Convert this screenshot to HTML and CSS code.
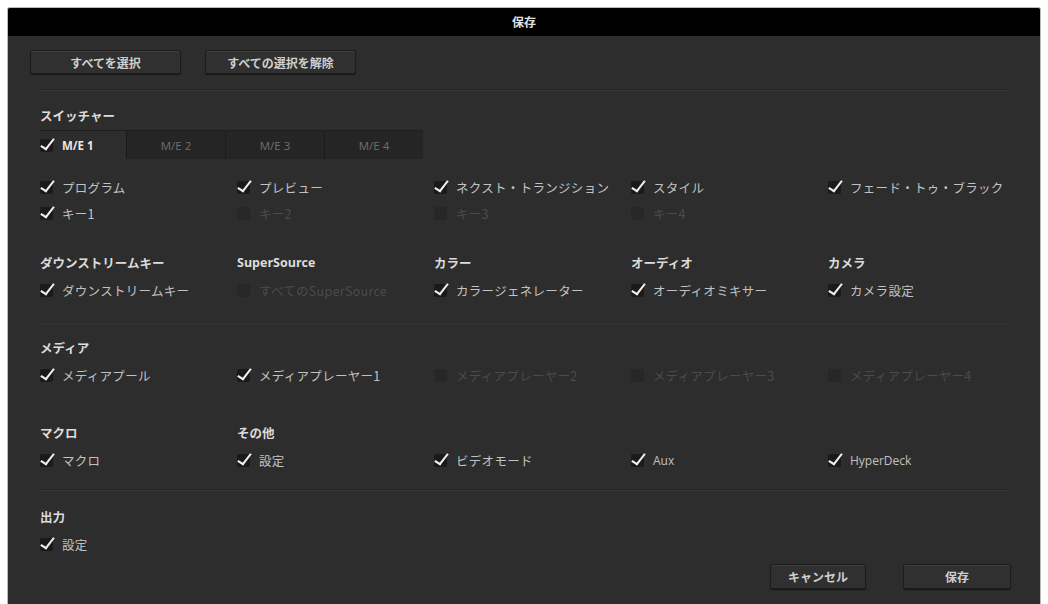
FILE: index.html
```html
<!DOCTYPE html>
<html lang="ja">
<head>
  <meta charset="UTF-8">
  <meta name="viewport" content="width=device-width, initial-scale=1.0">
  <title>保存</title>
  <link rel="stylesheet" href="styles.css">
</head>
<body>
  <div class="dialog">
    <div class="titlebar">保存</div>

    <div class="content">
      <div class="toolbar">
        <button class="btn btn-wide">すべてを選択</button>
        <button class="btn btn-wide">すべての選択を解除</button>
      </div>

      <div class="divider"></div>

      <!-- スイッチャー -->
      <section class="group group-switcher">
        <h2 class="group-title">スイッチャー</h2>
        <div class="tabs">
          <div class="tab active">
            <span class="box checked"></span>M/E 1
          </div>
          <div class="tab">M/E 2</div>
          <div class="tab">M/E 3</div>
          <div class="tab">M/E 4</div>
        </div>
        <div class="grid grid-me">
          <label class="item"><span class="box checked"></span>プログラム</label>
          <label class="item"><span class="box checked"></span>プレビュー</label>
          <label class="item"><span class="box checked"></span>ネクスト・トランジション</label>
          <label class="item"><span class="box checked"></span>スタイル</label>
          <label class="item"><span class="box checked"></span>フェード・トゥ・ブラック</label>
          <label class="item"><span class="box checked"></span>キー1</label>
          <label class="item disabled"><span class="box"></span>キー2</label>
          <label class="item disabled"><span class="box"></span>キー3</label>
          <label class="item disabled"><span class="box"></span>キー4</label>
        </div>
      </section>

      <section class="group group-sources">
        <div class="grid">
          <div class="col">
            <h2 class="group-title">ダウンストリームキー</h2>
            <label class="item"><span class="box checked"></span>ダウンストリームキー</label>
          </div>
          <div class="col">
            <h2 class="group-title latin">SuperSource</h2>
            <label class="item disabled"><span class="box"></span>すべてのSuperSource</label>
          </div>
          <div class="col">
            <h2 class="group-title">カラー</h2>
            <label class="item"><span class="box checked"></span>カラージェネレーター</label>
          </div>
          <div class="col">
            <h2 class="group-title">オーディオ</h2>
            <label class="item"><span class="box checked"></span>オーディオミキサー</label>
          </div>
          <div class="col">
            <h2 class="group-title">カメラ</h2>
            <label class="item"><span class="box checked"></span>カメラ設定</label>
          </div>
        </div>
      </section>

      <div class="divider divider-media"></div>

      <!-- メディア -->
      <section class="group group-media">
        <h2 class="group-title">メディア</h2>
        <div class="grid">
          <label class="item"><span class="box checked"></span>メディアプール</label>
          <label class="item"><span class="box checked"></span>メディアプレーヤー1</label>
          <label class="item disabled"><span class="box"></span>メディアプレーヤー2</label>
          <label class="item disabled"><span class="box"></span>メディアプレーヤー3</label>
          <label class="item disabled"><span class="box"></span>メディアプレーヤー4</label>
        </div>
      </section>

      <section class="group group-macro">
        <div class="grid">
          <div class="col">
            <h2 class="group-title">マクロ</h2>
            <label class="item"><span class="box checked"></span>マクロ</label>
          </div>
          <div class="col">
            <h2 class="group-title">その他</h2>
            <label class="item"><span class="box checked"></span>設定</label>
          </div>
          <div class="col">
            <h2 class="group-title">&nbsp;</h2>
            <label class="item"><span class="box checked"></span>ビデオモード</label>
          </div>
          <div class="col">
            <h2 class="group-title">&nbsp;</h2>
            <label class="item latin-item"><span class="box checked"></span>Aux</label>
          </div>
          <div class="col">
            <h2 class="group-title">&nbsp;</h2>
            <label class="item latin-item"><span class="box checked"></span>HyperDeck</label>
          </div>
        </div>
      </section>

      <div class="divider divider-output"></div>

      <!-- 出力 -->
      <section class="group group-output">
        <h2 class="group-title">出力</h2>
        <label class="item"><span class="box checked"></span>設定</label>
      </section>

      <div class="footer">
        <button class="btn btn-cancel">キャンセル</button>
        <button class="btn btn-save">保存</button>
      </div>
    </div>
  </div>
</body>
</html>
```

FILE: styles.css
```css
html, body {
  margin: 0;
  padding: 0;
  background-color: #ffffff;
  height: 100%;
  overflow: hidden;
}

body {
  padding: 7px 7px 0 7px;
  box-sizing: border-box;
  font-family: "Noto Sans CJK JP", "Noto Sans", sans-serif;
}

.dialog {
  width: 1034px;
  height: 620px;
  background-color: #2d2d2d;
  border: 1px solid #b9b9b9;
  border-bottom: none;
  border-radius: 3px 3px 0 0;
  box-sizing: border-box;
  overflow: hidden;
}

.titlebar {
  height: 28px;
  line-height: 28px;
  background-color: #000;
  color: #e0e0e0;
  font-size: 12px;
  font-weight: bold;
  text-align: center;
}

.content {
  padding: 0 29px 0 32px;
}

/* buttons */
.btn {
  font-family: "Noto Sans CJK JP", "Noto Sans", sans-serif;
  font-size: 12px;
  font-weight: bold;
  color: #cfcfcf;
  background-color: #303030;
  border: 1px solid #1c1c1c;
  border-radius: 2px;
  box-shadow: inset 0 1px 0 #3e3e3e, 0 1px 1px rgba(0, 0, 0, 0.5);
  height: 24px;
  padding: 0;
  cursor: pointer;
}

.toolbar {
  display: flex;
  gap: 24px;
  margin: 14px 0 0 -10px;
}

.btn-wide {
  width: 151px;
}

.divider {
  height: 0;
  border-top: 1px solid #252525;
  border-bottom: 1px solid #363636;
  margin-top: 15px;
}

.divider-media {
  margin-top: 19px;
}

.divider-output {
  margin-top: 16px;
}

/* groups */
.group-title {
  margin: 0 0 4px 0;
  font-size: 12.5px;
  line-height: 20px;
  font-weight: bold;
  color: #dcdcdc;
  white-space: nowrap;
}

.group-title.latin {
  font-family: "Open Sans", "Noto Sans", sans-serif;
  font-size: 12.5px;
}

.group-switcher { margin-top: 15px; }
.group-sources { margin-top: 27px; }
.group-media { margin-top: 14px; }
.group-macro { margin-top: 35px; }
.group-output { margin-top: 16px; }

.grid {
  display: grid;
  grid-template-columns: repeat(5, 197px);
}

.grid-me {
  margin-top: 15px;
}

.item {
  display: flex;
  align-items: center;
  height: 26px;
  font-size: 12.5px;
  letter-spacing: 0.3px;
  color: #c2c2c2;
  white-space: nowrap;
}

.latin-item {
  font-family: "Open Sans", "Noto Sans", sans-serif;
  font-size: 12px;
  letter-spacing: 0;
}

.item.disabled {
  color: #4b4b4b;
}

/* checkbox */
.box {
  position: relative;
  flex: none;
  width: 13px;
  height: 13px;
  margin-right: 9px;
  background-color: #1a1a1a;
  border-radius: 2px;
}

.disabled .box {
  background-color: #272727;
}

.box.checked::after {
  content: "";
  position: absolute;
  left: 4px;
  top: -3px;
  width: 5px;
  height: 12px;
  border-right: 2.5px solid #f0f0f0;
  border-bottom: 2.5px solid #f0f0f0;
  transform: rotate(38deg) skewY(-6deg);
  transform-origin: center;
}

/* tabs */
.tabs {
  display: flex;
  width: 383px;
  height: 29px;
  background-color: #252525;
  border-top: 1px solid #1e1e1e;
  box-sizing: border-box;
}

.tab {
  flex: 1;
  display: flex;
  align-items: center;
  justify-content: center;
  font-family: "Open Sans", "Noto Sans", sans-serif;
  font-size: 11.5px;
  color: #707070;
  border-left: 1px solid #1b1b1b;
}

.tab.active {
  flex: none;
  width: 86px;
  justify-content: flex-start;
  background-color: #2d2d2d;
  color: #e8e8e8;
  font-weight: bold;
  border-left: none;
}

/* footer */
.footer {
  display: flex;
  justify-content: flex-end;
  gap: 37px;
  margin-top: 7px;
}

.btn-cancel {
  width: 96px;
  height: 25px;
}

.btn-save {
  width: 108px;
  height: 25px;
}
```
